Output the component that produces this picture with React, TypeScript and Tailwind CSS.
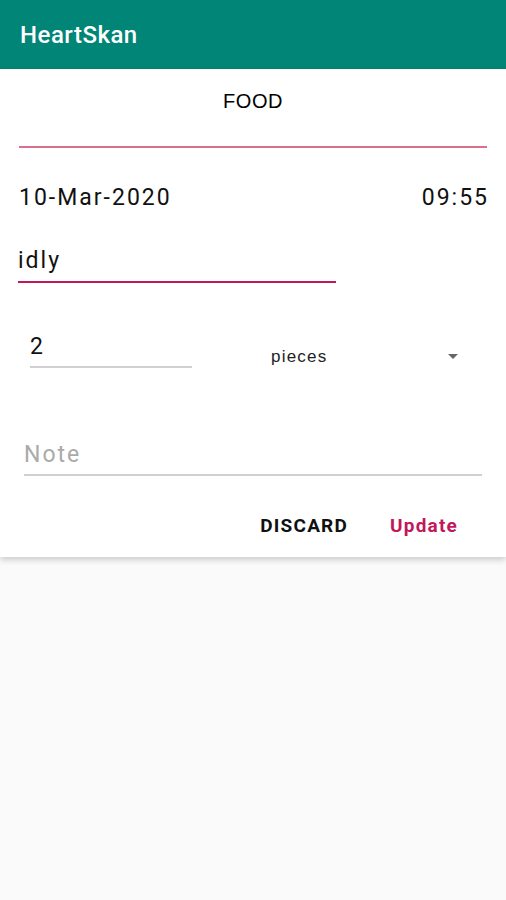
export default function App() {
  return (
    <div className="min-h-[900px] bg-[#fafafa] font-['Roboto',sans-serif]">
      <header className="h-[69px] bg-[#008577] flex items-center px-5">
        <h1 className="text-white text-[24px] font-medium tracking-[0.5px]">HeartSkan</h1>
      </header>

      <div className="bg-white shadow-[0_3px_6px_rgba(0,0,0,0.18)] pb-[22px]">
        <div className="pt-[77px] relative">
          <p className="absolute top-[17px] left-0 right-0 text-center text-[20px] tracking-[0.5px] text-black font-['Liberation_Sans',sans-serif]">
            FOOD
          </p>
          <div className="mx-[19px] h-[2px] bg-[#d8708e]" />
        </div>

        <div className="flex justify-between items-center pl-[19px] pr-[17px] mt-[38px] text-[23px] tracking-[2px] text-[#111] leading-none">
          <span>10-Mar-2020</span>
          <span>09:55</span>
        </div>

        <div className="ml-[18px] w-[318px] mt-[40px]">
          <p className="text-[23px] tracking-[2px] text-[#111] leading-none pb-[9px]">idly</p>
          <div className="h-[2px] bg-[#c2185b]" />
        </div>

        <div className="flex items-end mt-[52px]">
          <div className="ml-[30px] w-[162px]">
            <p className="text-[23px] text-[#111] leading-none pb-[8px]">2</p>
            <div className="h-[2px] bg-[#d0d0d0]" />
          </div>
          <div className="flex-1 flex items-center justify-between pl-[79px] pr-[48px] relative top-[1px]">
            <span className="text-[17px] tracking-[1.2px] text-[#222] font-['Liberation_Sans',sans-serif]">pieces</span>
            <svg width="10" height="5" viewBox="0 0 10 5">
              <path d="M0 0 L10 0 L5 5 Z" fill="#666" />
            </svg>
          </div>
        </div>

        <div className="mx-[24px] mt-[75px]">
          <p className="text-[23px] text-[#aaa] leading-none pb-[8px] tracking-[2px]">Note</p>
          <div className="h-[2px] bg-[#d0d0d0]" />
        </div>

        <div className="flex justify-end items-center gap-[42px] pr-[48px] mt-[40px] text-[19px] font-bold tracking-[1.2px] leading-none">
          <span className="text-[#111]">DISCARD</span>
          <span className="text-[#c2185b]">Update</span>
        </div>
      </div>
    </div>
  );
}
